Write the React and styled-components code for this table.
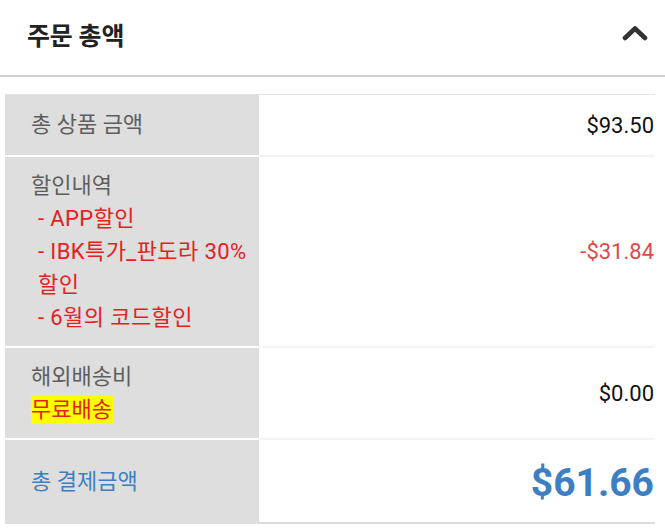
import styled, { createGlobalStyle } from 'styled-components';

const GlobalStyle = createGlobalStyle`
  body {
    margin: 0;
    background: #fff;
    font-family: Roboto, "Noto Sans CJK KR", sans-serif;
  }
`;

const App = () => {
  return (
    <Panel>
      <GlobalStyle />
      <Header>
        <Title>주문 총액</Title>
        <Chevron viewBox="0 0 26 16" aria-hidden="true">
          <path d="M3 13 L13 3.5 L23 13" fill="none" stroke="#333" strokeWidth="4.6" strokeLinecap="round" strokeLinejoin="round" />
        </Chevron>
      </Header>

      <Table>
        <Label $min={61}>총 상품 금액</Label>
        <Value $min={61}>$93.50</Value>

        <Label>
          할인내역
          <Discounts>
            <li>- APP할인</li>
            <li>- IBK특가_판도라 30% 할인</li>
            <li>- 6월의 코드할인</li>
          </Discounts>
        </Label>
        <Value $tone="minus">-$31.84</Value>

        <Label>
          해외배송비
          <br />
          <FreeTag>무료배송</FreeTag>
        </Label>
        <Value>$0.00</Value>

        <Label $min={84} $tone="total" $last>총 결제금액</Label>
        <Value $min={84} $tone="total" $last>$61.66</Value>
      </Table>
    </Panel>
  );
};

export default App;

const Panel = styled.div`
  width: 665px;
  height: 531px;
  overflow: hidden;
`;

const Header = styled.div`
  display: flex;
  align-items: center;
  justify-content: space-between;
  height: 77px;
  padding: 0 17px 0 27px;
  border-bottom: 2px solid #d0d0d0;
  box-sizing: border-box;
`;

const Title = styled.h2`
  margin: 0 0 8px;
  font-size: 25px;
  font-weight: 700;
  color: #222;
  letter-spacing: -0.2px;
`;

const Chevron = styled.svg`
  width: 26px;
  height: 16px;
  margin-bottom: 9px;
`;

const Table = styled.div`
  display: grid;
  grid-template-columns: 254px 1fr;
  margin: 17px 10px 0 5px;
  border-top: 1px solid #e2e2e2;
`;

const Label = styled.div`
  display: block;
  min-height: ${p => (p.$min ? `${p.$min}px` : 'auto')};
  padding: 12px 0 12px 26px;
  box-sizing: border-box;
  background: #dedede;
  border-bottom: ${p => (p.$last ? 'none' : '2px solid #fff')};
  font-size: 22px;
  line-height: ${p => (p.$min ? `${p.$min - 25}px` : '33px')};
  color: ${p => (p.$tone === 'total' ? '#3d7fc2' : '#5e5e5e')};
`;

const Value = styled.div`
  display: flex;
  align-items: center;
  justify-content: flex-end;
  min-height: ${p => (p.$min ? `${p.$min}px` : 'auto')};
  padding: ${p => (p.$tone === 'total' ? '3px 1px 0 0' : '0 1px 0 0')};
  box-sizing: border-box;
  border-bottom: ${p => (p.$last ? '2px solid #dcdcdc' : '2px solid #f4f4f4')};
  font-size: ${p => (p.$tone === 'total' ? '39px' : '22px')};
  font-weight: ${p => (p.$tone === 'total' ? 700 : 400)};
  color: ${p => (p.$tone === 'total' ? '#3d7fc2' : p.$tone === 'minus' ? '#dd4a48' : '#111')};
`;

const Discounts = styled.ul`
  list-style: none;
  margin: 0;
  padding: 0 0 0 7px;
  color: #e3221f;
  letter-spacing: 0.4px;

  li {
    line-height: 33px;
  }
`;

const FreeTag = styled.span`
  background: #ffff00;
  color: #e3221f;
  padding: 1px 1px 2px 0;
`;
